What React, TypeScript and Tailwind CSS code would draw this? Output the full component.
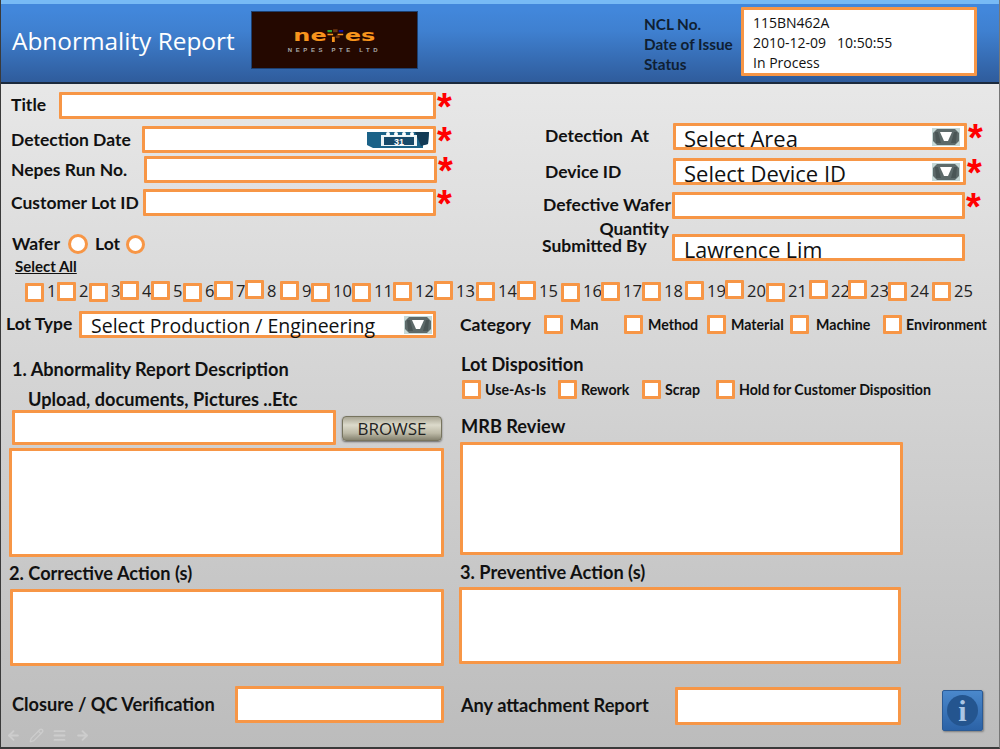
import { Pencil, Menu, ArrowLeft, ArrowRight } from 'lucide-react'

const labelFont = "font-['Lato','Liberation_Sans',sans-serif]"
const box = 'bg-white border-[3px] border-[#f79646] rounded-[1px]'

const lots = [
  { n: 1, w: 'w-[32px]', up: 'mt-[1px]' }, { n: 2, w: 'w-[32px]', up: '' }, { n: 3, w: 'w-[31px]', up: 'mt-[1px]' }, { n: 4, w: 'w-[31px]', up: '-mt-[1px]' },
  { n: 5, w: 'w-[32px]', up: '-mt-[1px]' }, { n: 6, w: 'w-[31px]', up: 'mt-[1px]' }, { n: 7, w: 'w-[31px]', up: '-mt-[1px]' }, { n: 8, w: 'w-[35px]', up: '-mt-[2px]' },
  { n: 9, w: 'w-[31px]', up: '-mt-[1px]' }, { n: 10, w: 'w-[41px]', up: 'mt-[1px]' }, { n: 11, w: 'w-[41px]', up: 'mt-[1px]' }, { n: 12, w: 'w-[41px]', up: '' },
  { n: 13, w: 'w-[42px]', up: '-mt-[1px]' }, { n: 14, w: 'w-[41px]', up: '' }, { n: 15, w: 'w-[44px]', up: '-mt-[1px]' }, { n: 16, w: 'w-[40px]', up: 'mt-[1px]' },
  { n: 17, w: 'w-[41px]', up: '' }, { n: 18, w: 'w-[43px]', up: '' }, { n: 19, w: 'w-[40px]', up: '-mt-[1px]' }, { n: 20, w: 'w-[41px]', up: '-mt-[2px]' },
  { n: 21, w: 'w-[43px]', up: 'mt-[1px]' }, { n: 22, w: 'w-[39px]', up: '-mt-[2px]' }, { n: 23, w: 'w-[40px]', up: '-mt-[2px]' }, { n: 24, w: 'w-[44px]', up: '' },
  { n: 25, w: 'w-[50px]', up: '' },
]

const categories = [
  { label: 'Man', w: 'w-[80px]', gap: 'ml-[7px]' },
  { label: 'Method', w: 'w-[83px]', gap: 'ml-[5px]' },
  { label: 'Material', w: 'w-[83px]', gap: 'ml-[5px]' },
  { label: 'Machine', w: 'w-[93px]', gap: 'ml-[7px]' },
  { label: 'Environment', w: 'w-[110px]', gap: 'ml-[4px]' },
]

const dispositions = [
  { label: 'Use-As-Is', w: 'w-[96px]' },
  { label: 'Rework', w: 'w-[84px]' },
  { label: 'Scrap', w: 'w-[74px]' },
  { label: 'Hold for Customer Disposition', w: 'w-[230px]' },
]

function Check({ className = '' }: { className?: string }) {
  return <span className={`block w-[19px] h-[19px] shrink-0 ${box} ${className}`} />
}

function Star() {
  return <span className="text-[#ff0000] font-['Liberation_Sans',sans-serif] font-bold text-[38px] leading-[26px] h-[20px] mt-[2px] ml-[1px]">*</span>
}

function DropIcon() {
  return (
    <svg width="28" height="20" viewBox="0 0 28 20" className="shrink-0">
      <rect x="0" y="1" width="28" height="18" fill="#c6d8d6" />
      <path d="M1 6 L5 2 H23 L27 6 V14 L23 18 H5 L1 14 Z" fill="#5d6a6a" />
      <path d="M3 5 H6 L9 16 H4 Z" fill="#4a5656" />
      <path d="M25 5 H22 L19 16 H24 Z" fill="#4a5656" />
      <path d="M8 5 H20 L16 14 H12 Z" fill="#ffffff" />
    </svg>
  )
}

function CalendarIcon() {
  return (
    <svg width="64" height="18" viewBox="0 0 64 18" className="shrink-0">
      <path d="M0 1 H62 L61 13 L56 14 V17 H6 L0 14 Z" fill="#1b6288" />
      <path d="M48 1 H62 L61 13 L54 15 Z" fill="#123a55" />
      <rect x="14" y="4" width="36" height="11" fill="#eef4f6" />
      <circle cx="21" cy="3" r="2" fill="#ffffff" />
      <circle cx="29" cy="3" r="2" fill="#ffffff" />
      <circle cx="37" cy="3" r="2" fill="#ffffff" />
      <circle cx="45" cy="3" r="2" fill="#ffffff" />
      <rect x="17" y="6" width="30" height="8" fill="#17496a" />
      <text x="32" y="13.5" textAnchor="middle" fontSize="9" fontWeight="700" fontFamily="Liberation Sans" fill="#ffffff">31</text>
    </svg>
  )
}

function Logo() {
  return (
    <div className="w-[167px] h-[58px] ml-[17px] mt-[11px] bg-[#240800] border border-[#1d3f70] flex flex-col items-center pt-[17px]">
      <div className="flex items-center h-[14px] font-['DejaVu_Sans',sans-serif] font-bold text-[#f7941d] text-[16px] leading-[14px] scale-x-[1.5]">
        <span>ne</span>
        <svg width="12" height="18" viewBox="0 0 16 18" className="shrink-0">
          <rect x="1" y="6" width="5" height="2" fill="#f7941d" />
          <rect x="10" y="6" width="5" height="2" fill="#f7941d" />
          <rect x="5" y="10" width="2.5" height="7" fill="#f7941d" />
          <rect x="6" y="0" width="4" height="4" fill="#6b3410" />
          <rect x="1" y="1" width="4" height="3" fill="#2fa02f" />
          <rect x="11" y="1" width="4" height="3" fill="#10109a" />
          <circle cx="10" cy="10" r="2" fill="#6b3410" />
        </svg>
        <span>es</span>
      </div>
      <span className="font-['Liberation_Sans',sans-serif] font-bold text-[6px] leading-[8px] tracking-[3.6px] text-[#a8a8a8] mt-[3px]">NEPES PTE LTD</span>
    </div>
  )
}

function InfoButton() {
  return (
    <div className="absolute left-[941px] top-[690px] w-[41px] h-[41px] rounded-[2px] bg-[linear-gradient(#4a88cc,#2b62a6)] border border-[#2b5a94] shadow-[1px_1px_2px_rgba(0,0,0,0.35)] flex items-center justify-center">
      <div className="w-[31px] h-[31px] rounded-full bg-[#24558f] flex items-center justify-center">
        <span className="font-['Liberation_Serif',serif] font-bold text-[30px] leading-[30px] text-[#a9c6e6]">i</span>
      </div>
    </div>
  )
}

export default function App() {
  return (
    <div className={`relative w-[1000px] h-[749px] overflow-hidden bg-[linear-gradient(#ededed,#bcbcbc)] border-l border-r border-r-[#777] border-b-2 border-[#3a3a3a] text-[#111] ${labelFont}`}>
      {/* header */}
      <header className="h-[84px] -mx-[1px] flex bg-[linear-gradient(#4287db_8%,#3f80d0_35%,#2f5c9c)] border-t-[4px] border-t-[#77baf5] border-b-[2px] border-b-[#1b2a3d] text-[#0f1f33]">
        <h1 className="w-[234px] pl-[12px] mt-[18px] font-['Open_Sans',sans-serif] text-[24.4px] leading-[38px] text-white whitespace-nowrap">Abnormality Report</h1>
        <div className="-mt-[4px]"><Logo /></div>
        <div className="ml-[226px] mt-[10px] font-bold text-[15.3px] leading-[20px] w-[97px] whitespace-nowrap">
          <div>NCL No.</div>
          <div>Date of Issue</div>
          <div>Status</div>
        </div>
        <div className={`w-[236px] h-[69px] mt-[3px] ${box} pl-[9px] pt-[3px] text-[14px] leading-[20px] text-[#111] font-['Open_Sans',sans-serif]`}>
          <div>115BN462A</div>
          <div className="whitespace-pre">2010-12-09   10:50:55</div>
          <div>In Process</div>
        </div>
      </header>

      {/* top fields */}
      <div className="flex">
        <div className="w-[498px] flex flex-col font-bold text-[17.5px]">
          <div className="flex h-[27px] mt-[8px]">
            <span className="w-[58px] pl-[10px] leading-[25px]">Title</span>
            <span className={`w-[377px] ${box}`} />
            <Star />
          </div>
          <div className="flex h-[27px] mt-[7px]">
            <span className="w-[141px] pl-[10px] leading-[27px]">Detection Date</span>
            <span className={`w-[294px] ${box} flex items-center justify-end pr-[2px]`}><CalendarIcon /></span>
            <Star />
          </div>
          <div className="flex h-[27px] mt-[3px]">
            <span className="w-[143px] pl-[10px] leading-[27px]">Nepes Run No.</span>
            <span className={`w-[293px] ${box}`} />
            <Star />
          </div>
          <div className="flex h-[27px] mt-[6px]">
            <span className="w-[142px] pl-[10px] leading-[27px] whitespace-nowrap">Customer Lot ID</span>
            <span className={`w-[293px] ${box}`} />
            <Star />
          </div>
          <div className="flex items-center h-[20px] mt-[18px] pl-[11px]">
            <span className="w-[56px]">Wafer</span>
            <span className={`w-[20px] h-[20px] ${box} !rounded-full`} />
            <span className="ml-[7px] w-[31px]">Lot</span>
            <span className={`w-[19px] h-[19px] ${box} !rounded-full`} />
          </div>
          <a className="ml-[14px] mt-[2px] text-[15px] leading-[20px] underline">Select All</a>
        </div>

        <div className="flex flex-col font-bold text-[17.5px]">
          <div className="flex h-[27px] mt-[39px]">
            <span className="w-[174px] pl-[46px] leading-[25px] whitespace-pre">Detection  At</span>
            <span className={`w-[294px] ${box} flex items-center justify-between pr-[4px] pl-[8px] font-['Open_Sans',sans-serif] font-normal text-[22px] leading-[24px]`}>
              <span className="mt-[3px]">Select Area</span>
              <DropIcon />
            </span>
            <Star />
          </div>
          <div className="flex h-[27px] mt-[8px]">
            <span className="w-[174px] pl-[46px] leading-[27px]">Device ID</span>
            <span className={`w-[293px] ${box} flex items-center justify-between pr-[3px] pl-[8px] font-['Open_Sans',sans-serif] font-normal text-[22px] leading-[24px]`}>
              <span className="mt-[3px]">Select Device ID</span>
              <DropIcon />
            </span>
            <Star />
          </div>
          <div className="flex h-[27px] mt-[7px]">
            <span className="w-[173px] pr-[1px] text-right leading-[25px] whitespace-nowrap">Defective Wafer</span>
            <span className={`w-[293px] ${box}`} />
            <Star />
          </div>
          <div className="flex h-[27px] mt-[15px]">
            <div className="w-[173px] relative">
              <span className="absolute right-[3px] -top-[15px] leading-[20px]">Quantity</span>
              <span className="absolute left-[43px] top-[2px] leading-[20px] whitespace-nowrap">Submitted By</span>
            </div>
            <span className={`w-[293px] ${box} pl-[9px] font-['Open_Sans',sans-serif] font-normal text-[21.5px] leading-[25px]`}>Lawrence Lim</span>
          </div>
        </div>
      </div>

      {/* wafer numbers */}
      <div className="flex h-[20px] mt-[6px] pl-[24px] font-['Open_Sans',sans-serif] text-[16.5px] leading-[18px] text-[#222]">
        {lots.map((lot) => (
          <div key={lot.n} className={`flex shrink-0 ${lot.w}`}>
            <Check className={lot.up} />
            <span className="ml-[3px]">{lot.n}</span>
          </div>
        ))}
      </div>

      {/* lot type and category */}
      <div className="flex h-[27px] mt-[9px] font-bold">
        <div className="w-[458px] flex text-[17.5px]">
          <span className="w-[78px] pl-[5px] leading-[25px]">Lot Type</span>
          <span className={`w-[357px] ${box} flex items-center justify-between pr-[1px] pl-[9px] font-['Open_Sans',sans-serif] font-normal text-[19.5px] leading-[24px]`}>
            <span className="mt-[3px]">Select Production / Engineering</span>
            <DropIcon />
          </span>
        </div>
        <span className="w-[85px] pl-[1px] text-[17.5px] leading-[27px]">Category</span>
        <div className="flex text-[14.2px] mt-[4px]">
          {categories.map((c) => (
            <div key={c.label} className={`flex shrink-0 ${c.w}`}>
              <Check />
              <span className={`${c.gap} leading-[19px] whitespace-nowrap`}>{c.label}</span>
            </div>
          ))}
        </div>
      </div>

      {/* lower form */}
      <div className="flex font-bold text-[18.2px]">
        <div className="w-[458px] flex flex-col">
          <h2 className="mt-[19px] pl-[11px] leading-[24px]">1. Abnormality Report Description</h2>
          <div className="mt-[6px] pl-[27px] leading-[24px]">Upload, documents, Pictures ..Etc</div>
          <div className="flex items-center -mt-[1px] pl-[11px]">
            <span className={`w-[324px] h-[35px] ${box}`} />
            <button className="ml-[6px] w-[100px] h-[25px] mt-[2px] rounded-[4px] border border-[#77745f] bg-[linear-gradient(#a9a694,#dcdacb_35%,#bdbaa7_70%,#85826f)] shadow-[0_1px_2px_rgba(0,0,0,0.5)] font-['Open_Sans',sans-serif] font-normal text-[17px] leading-[22px] text-[#222]">BROWSE</button>
          </div>
          <span className={`block ml-[8px] w-[435px] h-[109px] mt-[3px] ${box}`} />
          <h2 className="mt-[4px] pl-[8px] leading-[24px]">2. Corrective Action (s)</h2>
          <span className={`block ml-[9px] w-[434px] h-[77px] mt-[4px] ${box}`} />
          <div className="flex mt-[20px] h-[37px]">
            <span className="w-[234px] pl-[11px] leading-[36px]">Closure / QC Verification</span>
            <span className={`w-[209px] ${box}`} />
          </div>
        </div>
        <div className="flex flex-col">
          <h2 className="mt-[14px] leading-[24px] ml-[2px]">Lot Disposition</h2>
          <div className="flex text-[14.2px] mt-[4px] ml-[3px]">
            {dispositions.map((d) => (
              <div key={d.label} className={`flex shrink-0 ${d.w}`}>
                <Check />
                <span className="ml-[4px] leading-[19px] whitespace-nowrap">{d.label}</span>
              </div>
            ))}
          </div>
          <h2 className="mt-[15px] leading-[24px] ml-[2px]">MRB Review</h2>
          <span className={`block ml-[1px] w-[443px] h-[113px] mt-[4px] ${box}`} />
          <h2 className="mt-[5px] leading-[24px] ml-[1px]">3. Preventive Action (s)</h2>
          <span className={`block w-[442px] h-[77px] mt-[3px] ${box}`} />
          <div className="flex mt-[23px] h-[38px]">
            <span className="w-[214px] ml-[2px] leading-[37px] whitespace-nowrap">Any attachment Report</span>
            <span className={`w-[226px] ${box}`} />
          </div>
        </div>
      </div>

      <InfoButton />

      {/* faded slide controls */}
      <div className="absolute left-[5px] top-[728px] flex gap-[8px] text-[#cdcdcd]">
        <ArrowLeft size={15} strokeWidth={3} />
        <Pencil size={15} />
        <Menu size={15} strokeWidth={3} />
        <ArrowRight size={15} strokeWidth={3} />
      </div>
    </div>
  )
}
